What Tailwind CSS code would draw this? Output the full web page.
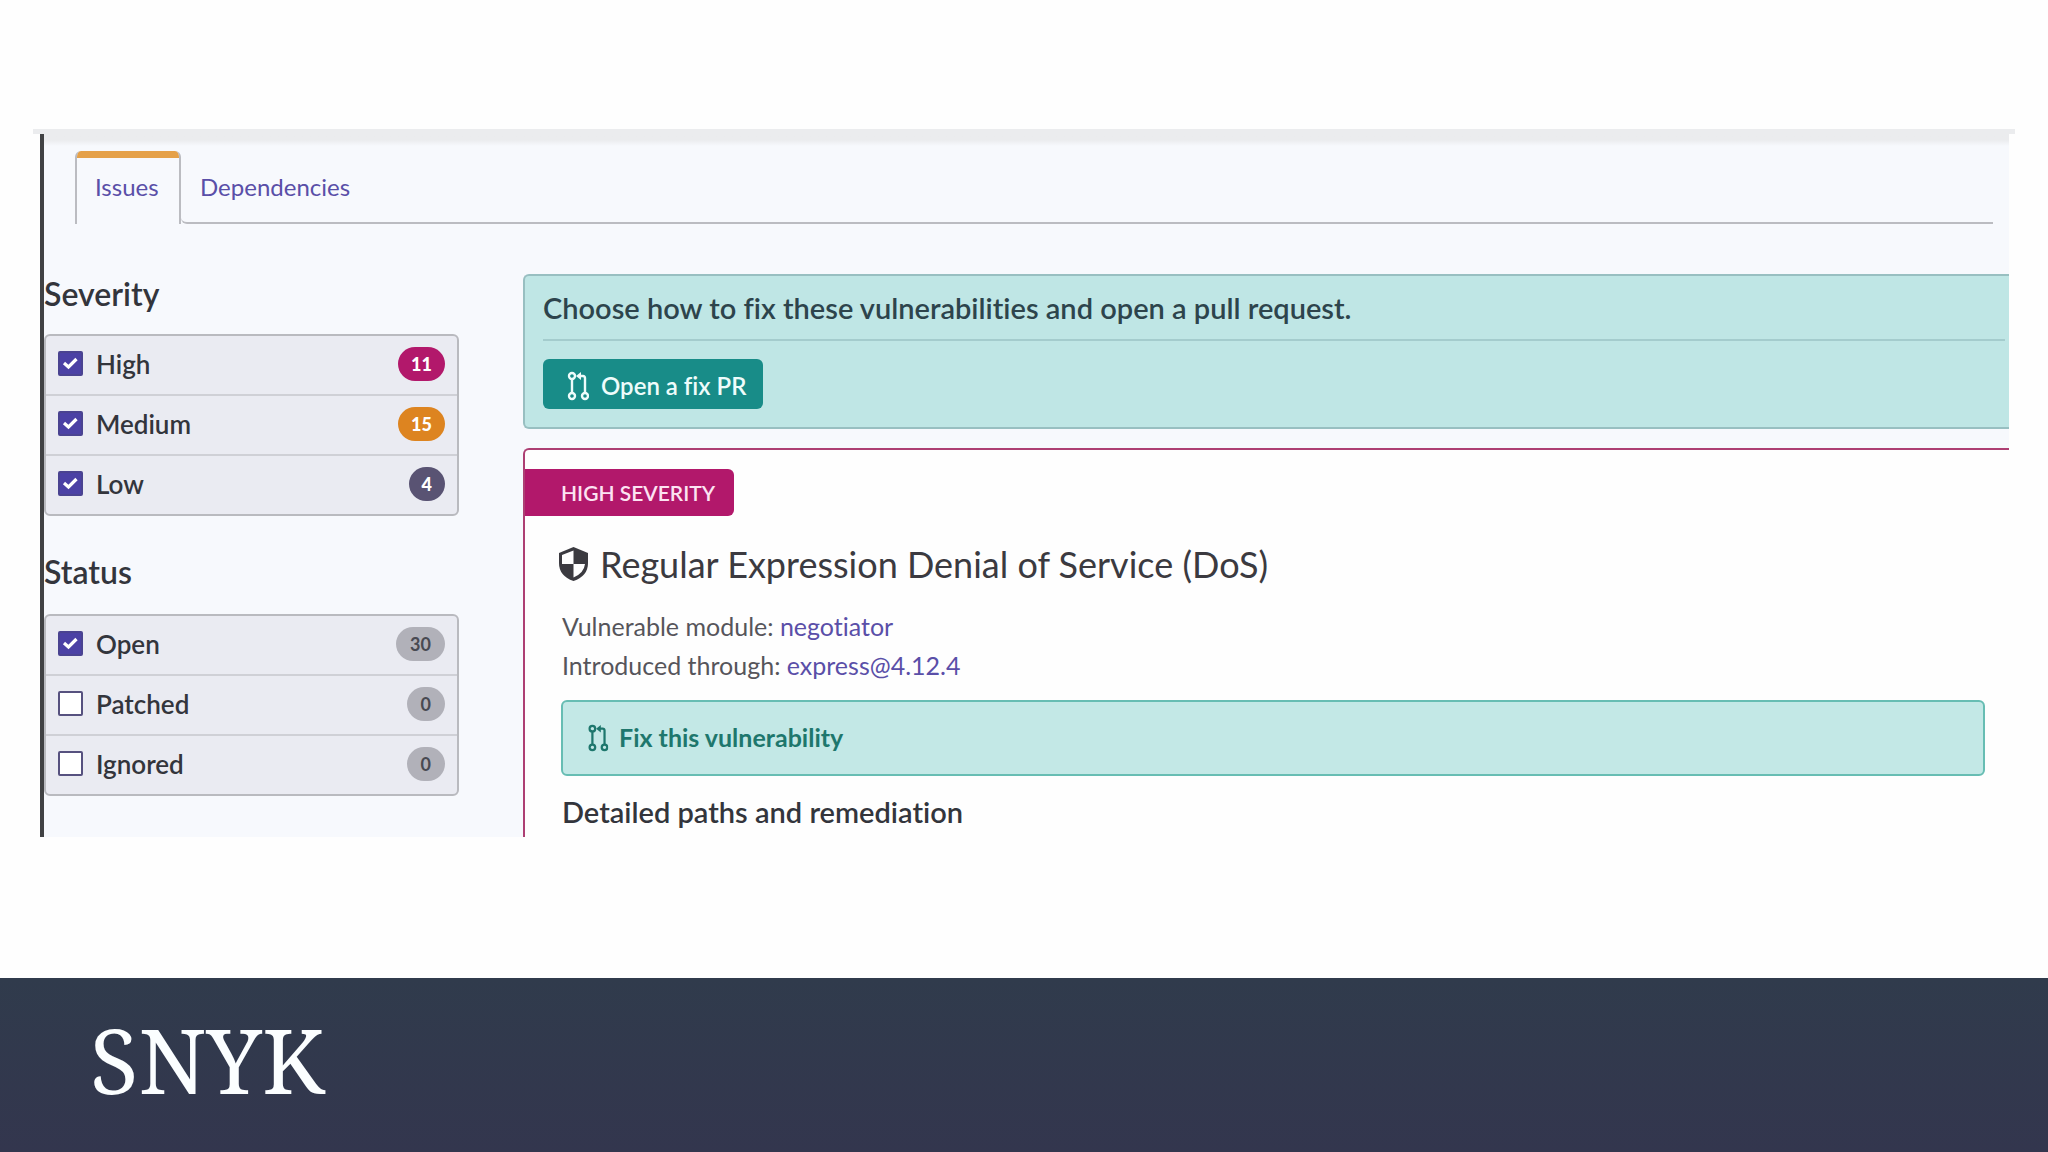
<!DOCTYPE html>
<html lang="en">
<head>
<meta charset="utf-8">
<title>Snyk</title>
<script src="https://cdn.jsdelivr.net/npm/@tailwindcss/browser@4"></script>
</head>
<body class="flex min-h-screen flex-col bg-[#fefefe] font-['Lato',sans-serif] text-[#33353c] [font-variant-ligatures:none]">
<svg class="hidden" aria-hidden="true">
  <symbol id="check" viewBox="0 0 25 25"><path d="M6 12l4.500 4L18.500 8" fill="none" stroke="#fff" stroke-width="3.200"/></symbol>
  <symbol id="pr" viewBox="0 0 22 30"><g fill="none" stroke="currentColor" stroke-width="2.400"><circle cx="5" cy="5" r="3"/><circle cx="5" cy="25" r="3"/><circle cx="18" cy="25" r="3"/><path d="M5 8v14M18 22V7q0-2-2-2h-3"/></g><path d="M14 1v8L9 5z" fill="currentColor"/></symbol>
</svg>
<main class="flex-1 pt-[129px] pr-[33px] pb-[141px] pl-[33px]">
  <div class="h-[5px] bg-[#ebecee]"></div>
  <div class="ml-[7px] mr-[6px] border-l-4 border-[#414244] bg-[#f7f9fd]">
    <div class="h-3 bg-linear-to-b from-[#ebecee] from-50% to-[#f7f9fd]"></div>
    <nav class="mt-[5px] mr-4 ml-[31px] flex h-[73px] text-2xl text-[#5a4fa8]" aria-label="Project views">
      <a href="#issues" class="w-[106px] overflow-hidden rounded-t-md border-x-2 border-[#bbbcc1]"><span class="block border-t-7 border-[#e5a14a] pt-[13px] pl-[18px] leading-8">Issues</span></a>
      <a href="#dependencies" class="flex-1 rounded-bl-md border-b-2 border-[#bbbcc1] pt-5 pl-[19px] leading-8">Dependencies</a>
    </nav>
    <div class="flex h-[613px] overflow-hidden pt-[50px]">
      <aside class="w-[415px] shrink-0">
        <h2 class="h-[60px] text-[32px] leading-10 font-semibold">Severity</h2>
        <div class="divide-y-2 divide-[#cfd0d6] rounded-md border-2 border-[#b9babf] bg-[#eaebf2] text-[26px] font-semibold">
          <div class="flex h-[60px] items-center px-3 pb-[2px]">
            <span class="grid pb-[2px]"><input id="high" type="checkbox" checked class="peer col-start-1 row-start-1 size-[25px] appearance-none rounded-xs border-2 border-[#4a4391] bg-white checked:bg-[#4b41a5]"><svg class="pointer-events-none invisible col-start-1 row-start-1 size-[25px] peer-checked:visible"><use href="#check"/></svg></span>
            <label for="high" class="ml-[13px] flex-1">High</label>
            <span class="rounded-full bg-[#b2186b] px-[13px] text-lg leading-[34px] font-black text-white">11</span>
          </div>
          <div class="flex h-[60px] items-center px-3 pb-[2px]">
            <span class="grid pb-[2px]"><input id="medium" type="checkbox" checked class="peer col-start-1 row-start-1 size-[25px] appearance-none rounded-xs border-2 border-[#4a4391] bg-white checked:bg-[#4b41a5]"><svg class="pointer-events-none invisible col-start-1 row-start-1 size-[25px] peer-checked:visible"><use href="#check"/></svg></span>
            <label for="medium" class="ml-[13px] flex-1">Medium</label>
            <span class="rounded-full bg-[#dd8420] px-[13px] text-lg leading-[34px] font-black text-white">15</span>
          </div>
          <div class="flex h-[58px] items-center px-3 pb-[2px]">
            <span class="grid pb-[2px]"><input id="low" type="checkbox" checked class="peer col-start-1 row-start-1 size-[25px] appearance-none rounded-xs border-2 border-[#4a4391] bg-white checked:bg-[#4b41a5]"><svg class="pointer-events-none invisible col-start-1 row-start-1 size-[25px] peer-checked:visible"><use href="#check"/></svg></span>
            <label for="low" class="ml-[13px] flex-1">Low</label>
            <span class="rounded-full bg-[#595373] px-[13px] text-lg leading-[34px] font-black text-white">4</span>
          </div>
        </div>
        <h2 class="mt-9 h-[62px] text-[32px] leading-10 font-semibold">Status</h2>
        <div class="divide-y-2 divide-[#cfd0d6] rounded-md border-2 border-[#b9babf] bg-[#eaebf2] text-[26px] font-semibold">
          <div class="flex h-[60px] items-center px-3 pb-[2px]">
            <span class="grid pb-[2px]"><input id="open" type="checkbox" checked class="peer col-start-1 row-start-1 size-[25px] appearance-none rounded-xs border-2 border-[#4a4391] bg-white checked:bg-[#4b41a5]"><svg class="pointer-events-none invisible col-start-1 row-start-1 size-[25px] peer-checked:visible"><use href="#check"/></svg></span>
            <label for="open" class="ml-[13px] flex-1">Open</label>
            <span class="rounded-full bg-[#b1b1b9] px-[14px] text-lg leading-[34px] font-bold text-[#494a52]">30</span>
          </div>
          <div class="flex h-[60px] items-center px-3 pb-[2px]">
            <span class="grid pb-[2px]"><input id="patched" type="checkbox" class="size-[25px] appearance-none rounded-xs border-2 border-[#56517f] bg-white checked:bg-[#4b41a5]"></span>
            <label for="patched" class="ml-[13px] flex-1">Patched</label>
            <span class="rounded-full bg-[#b1b1b9] px-[14px] text-lg leading-[34px] font-bold text-[#494a52]">0</span>
          </div>
          <div class="flex h-[58px] items-center px-3 pb-[2px]">
            <span class="grid pb-[2px]"><input id="ignored" type="checkbox" class="size-[25px] appearance-none rounded-xs border-2 border-[#56517f] bg-white checked:bg-[#4b41a5]"></span>
            <label for="ignored" class="ml-[13px] flex-1">Ignored</label>
            <span class="rounded-full bg-[#b1b1b9] px-[14px] text-lg leading-[34px] font-bold text-[#494a52]">0</span>
          </div>
        </div>
      </aside>
      <div class="ml-16 flex flex-1 flex-col">
        <section class="h-[155px] rounded-l-md border-2 border-r-0 border-[#98bfc1] bg-[#bfe6e5] pr-1 pl-[18px]">
          <h2 class="h-[65px] border-b-2 border-[#a4cccd] pt-3 text-[29px] leading-10 font-semibold text-[#2d444c]">Choose how to fix these vulnerabilities and open a pull request.</h2>
          <button type="button" class="mt-[18px] flex h-[50px] w-[220px] items-center rounded-md bg-[#188c88] pt-1 pl-[24px] text-2xl font-semibold text-[#eefcfb]"><svg class="mr-3 h-[30px] w-[22px]"><use href="#pr"/></svg>Open a fix PR</button>
        </section>
        <section class="mt-[19px] flex-1 rounded-tl-md border-t-2 border-l-2 border-[#ad3f73] bg-[#fefefe] pt-[19px]">
          <p class="h-[47px] w-[209px] rounded-r-md bg-[#b2186b] pl-[36px] text-[21px] leading-[47px] font-semibold text-[#fce3f2]">HIGH SEVERITY</p>
          <h2 class="mt-6 ml-[34px] flex h-[48px] items-center text-[36px] text-[#3b3a40]"><svg class="mr-3 h-[34px] w-[29px]" viewBox="0 0 29 34"><path d="M14.500 0L29 6v10q0 13-14.500 18Q0 29 0 16V6z" fill="currentColor"/><path d="M14.500 3.500v13.500H3V8zM14.500 17H26q-1 9-11.500 13.500z" fill="#fefefe"/></svg>Regular Expression Denial of Service (DoS)</h2>
          <div class="mt-[19px] ml-[37px] text-[25px] leading-[39px] text-[#56555b]">
            <p>Vulnerable module: <a href="#negotiator" class="text-[#5a4fa8]">negotiator</a></p>
            <p>Introduced through: <a href="#express" class="text-[#5a4fa8]">express@4.12.4</a></p>
          </div>
          <a href="#fix" class="mt-[15px] mr-6 ml-[36px] flex h-[76px] items-center rounded-md border-2 border-[#67bdb3] bg-[#c3e8e6] pl-[24px] text-[25px] font-bold text-[#1e776d]"><svg class="mr-[10px] h-[28px] w-[22px]" viewBox="0 0 22 30"><use href="#pr"/></svg>Fix this vulnerability</a>
          <h3 class="mt-4 ml-[37px] text-[29px] leading-10 font-semibold">Detailed paths and remediation</h3>
        </section>
      </div>
    </div>
  </div>
</main>
<footer class="bg-[#313a4d] bg-linear-to-b from-[#303b4c] to-[#33364e] px-[90px] pt-[27px] pb-[37px]">
  <h1 class="font-['Noto_Serif','Liberation_Serif',serif] text-[89px] leading-[110px] text-[#fbfeff]">SNYK</h1>
</footer>
</body>
</html>
